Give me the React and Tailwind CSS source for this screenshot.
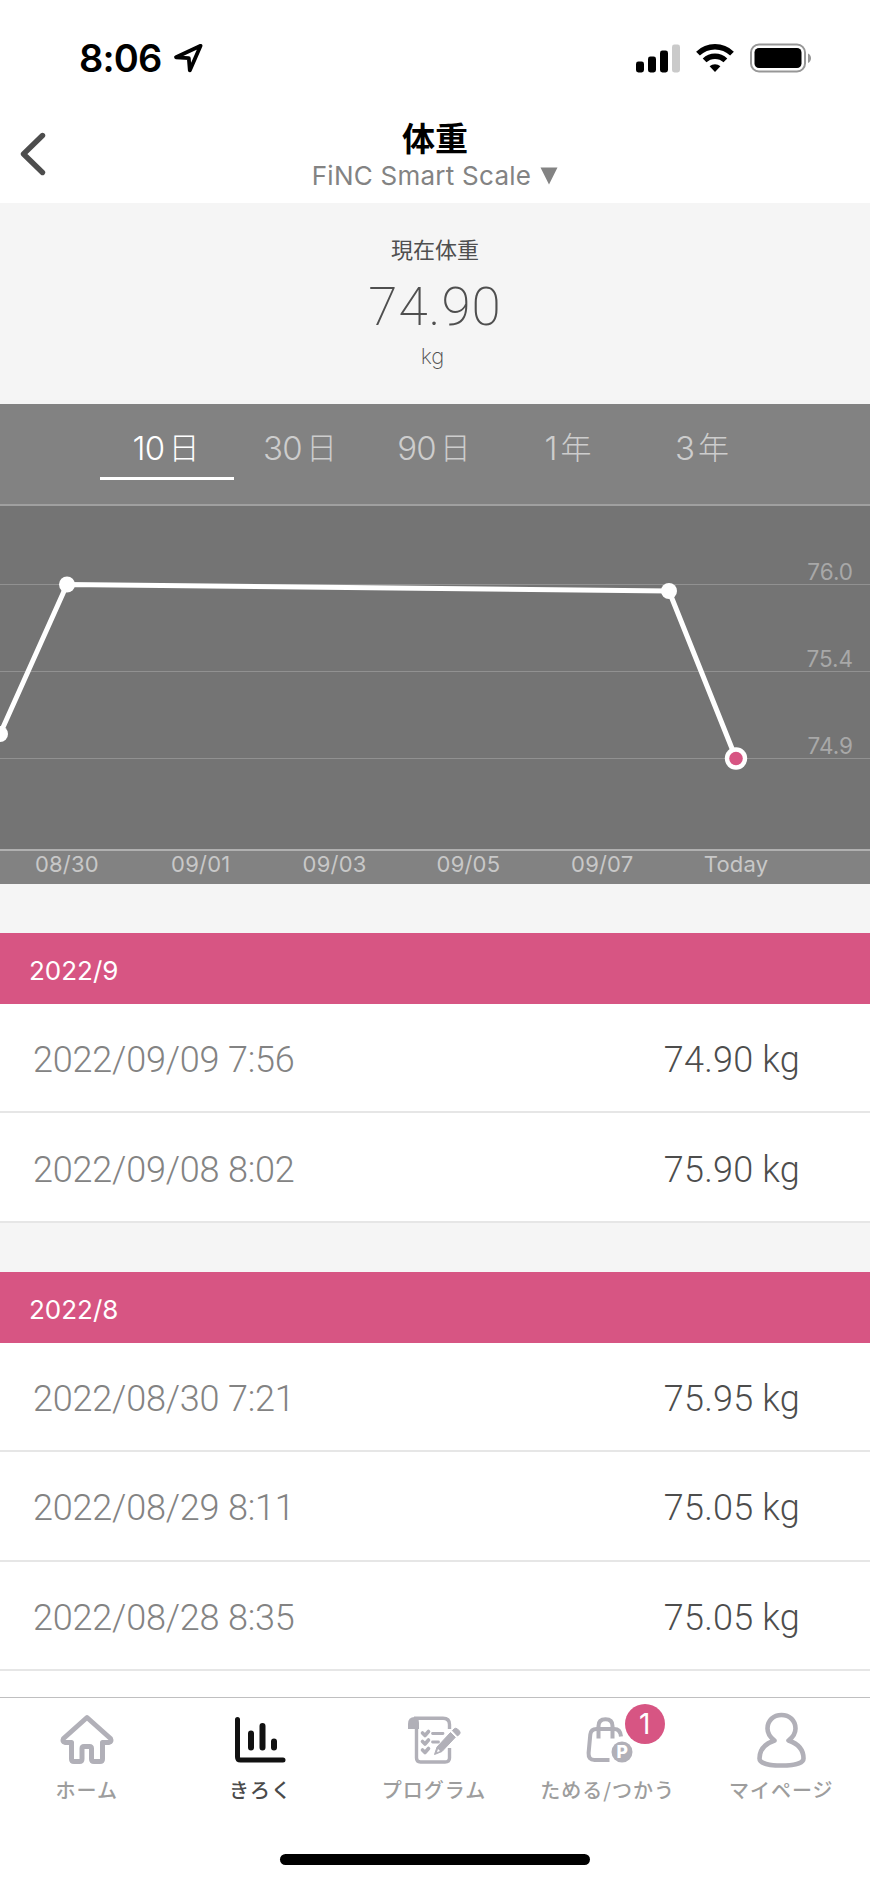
import React from 'react';

const ranges = [
  { count: '10', unit: '日' },
  { count: '30', unit: '日' },
  { count: '90', unit: '日' },
  { count: '1', unit: '年' },
  { count: '3', unit: '年' },
];

const dates = ['08/30', '09/01', '09/03', '09/05', '09/07', 'Today'];

const gridLines = [
  { y: 79.5, label: '76.0' },
  { y: 166.5, label: '75.4' },
  { y: 253.5, label: '74.9' },
];

const months = [
  {
    name: '2022/9',
    records: [
      { date: '2022/09/09 7:56', weight: '74.90 kg' },
      { date: '2022/09/08 8:02', weight: '75.90 kg' },
    ],
  },
  {
    name: '2022/8',
    records: [
      { date: '2022/08/30 7:21', weight: '75.95 kg' },
      { date: '2022/08/29 8:11', weight: '75.05 kg' },
      { date: '2022/08/28 8:35', weight: '75.05 kg' },
    ],
  },
];

const StatusBar = () => (
  <div className="h-[116px] pl-[79px] pr-[59px] flex items-center justify-between">
    <div className="flex items-center">
      <span className="text-[38px] leading-[38px] font-semibold tracking-[-0.8px] text-black">8:06</span>
      <svg className="ml-[11px]" width="32" height="32" viewBox="0 0 32 32" fill="none">
        <path d="M27.6 3.8 L3 15.3 L15.8 16.2 L16.8 28.4 Z" stroke="black" strokeWidth="3.8" strokeLinejoin="round" />
      </svg>
    </div>
    <svg width="176" height="30" viewBox="0 0 176 30">
      <rect x="1" y="18.5" width="8" height="11" rx="2.4" />
      <rect x="13" y="13.5" width="8" height="16" rx="2.4" />
      <rect x="25" y="7.5" width="8" height="22" rx="2.4" />
      <rect x="37" y="1.5" width="8" height="28" rx="2.4" fill="#cacaca" />
      <g fill="none" stroke="black" strokeWidth="5.4">
        <path d="M63 10.6 A24.5 24.5 0 0 1 97 10.6" />
        <path d="M69.6 17.4 A15 15 0 0 1 90.4 17.4" />
      </g>
      <path d="M80 29 L74.6 23.3 A8 8 0 0 1 85.4 23.3 Z" />
      <rect x="116" y="1.5" width="54" height="27" rx="8" fill="none" stroke="#979797" strokeWidth="2" />
      <rect x="119.5" y="5" width="47" height="20" rx="4.5" />
      <path d="M173 10.5 C177 12 177 18.5 173 20 Z" fill="#979797" />
    </svg>
  </div>
);

const Header = () => (
  <div className="h-[87px] grid grid-cols-[100px_1fr_100px]">
    <svg className="ml-[18px] mt-[14px]" width="32" height="48" viewBox="0 0 32 48" fill="none">
      <path d="M24.5 5.5 L5.5 24 L24.5 42.5" stroke="#4d4d4d" strokeWidth="5.4" strokeLinecap="round" strokeLinejoin="round" />
    </svg>
    <div className="flex flex-col items-center">
      <h1 className="mt-[5px] text-[33px] leading-[36px] font-bold text-black">体重</h1>
      <div className="mt-[3px] flex items-center text-[#838383]">
        <span className="text-[26px] leading-[32px] tracking-[0.25px]">FiNC Smart Scale</span>
        <svg className="ml-[9px]" width="18" height="18" viewBox="0 0 18 18">
          <path d="M0.5 0.5 H17.5 L9 17.5 Z" fill="#838383" />
        </svg>
      </div>
    </div>
  </div>
);

const CurrentWeight = () => (
  <div className="h-[201px] pt-[34px] flex flex-col items-center bg-[#f5f5f5] text-[#4f4f4f]">
    <p className="text-[22px] leading-[26px]">現在体重</p>
    <p className="mt-[18px] text-[53px] leading-[52px] font-extralight tracking-[1px] font-['Roboto',sans-serif]">74.90</p>
    <p className="mt-[10px] text-[22px] leading-[26px] font-extralight mr-[5px]">kg</p>
  </div>
);

const RangeTabs = () => (
  <div className="h-[100px] px-[100px] grid grid-cols-5 bg-[#828282]">
    {ranges.map(({ count, unit }, i) => (
      <button
        key={count}
        className={`h-[76px] pt-[24px] pr-[2px] text-[33px] leading-[40px] font-light border-b-[3px] flex justify-center gap-1 ${
          i === 0 ? 'text-white border-white' : 'text-[#cdcdcd] border-transparent'
        }`}
      >
        <span className="tracking-[-0.8px]">{count}</span>
        <span className="text-[31px]">{unit}</span>
      </button>
    ))}
  </div>
);

const Chart = () => (
  <div className="h-[380px] bg-[#828282]">
    <svg className="block" width="870" height="347" viewBox="0 0 870 347">
      <rect width="870" height="347" fill="#747474" />
      <rect width="870" height="2" fill="#a0a0a0" />
      {gridLines.map((line) => (
        <g key={line.label}>
          <rect y={line.y + 0.5} width="870" height="1" fill="#919191" />
          <text x="853" y={line.y - 4} textAnchor="end" fontSize="22.5" fill="#a8a8a8">{line.label}</text>
        </g>
      ))}
      <path d="M0 230 L67 80.5 L669 87 L736 254.5" fill="none" stroke="white" strokeWidth="5" strokeLinejoin="round" />
      <circle cx="0" cy="230" r="8" fill="white" />
      <circle cx="67" cy="80.5" r="8" fill="white" />
      <circle cx="669" cy="87" r="8" fill="white" />
      <circle cx="736" cy="254.5" r="11.2" fill="white" />
      <circle cx="736" cy="254.5" r="6.8" fill="#d75583" />
      <rect y="345" width="870" height="2" fill="#b0b0b0" />
    </svg>
    <div className="w-[803px] grid grid-cols-6 text-center text-[22px] leading-[26px] tracking-[0.2px] text-[#c8c8c8]">
      {dates.map((date) => (
        <span key={date}>{date}</span>
      ))}
    </div>
  </div>
);

const MonthSection = ({ name, records }) => (
  <section className="pt-[49px]">
    <h2 className="h-[71px] pl-[29px] pt-[4px] flex items-center bg-[#d75583] text-white text-[26px]">{name}</h2>
    {records.map((record) => (
      <div
        key={record.date}
        className="h-[109.4px] pt-[5px] pl-[33px] pr-[70px] flex items-center justify-between bg-white border-b-2 border-[#e6e6e6] text-[36px] font-light font-['Roboto',sans-serif]"
      >
        <span className="text-[#838383] tracking-[-0.2px]">{record.date}</span>
        <span className="text-[#4d4d4d] tracking-[0.2px]">{record.weight}</span>
      </div>
    ))}
  </section>
);

const HomeIcon = () => (
  <svg width="56" height="56" viewBox="0 0 56 56" fill="none" stroke="#b1b0b8" strokeWidth="5" strokeLinecap="round" strokeLinejoin="round">
    <path d="M28 5.5 L4.5 26.5 Q3 29.5 6 30.5 H12.5 V47 Q12.5 49.5 15 49.5 H20.5 Q23 49.5 23 47 V36.5 Q23 34.5 25 34.5 H30.5 Q32.5 34.5 32.5 36.5 V47 Q32.5 49.5 35 49.5 H41 Q43.5 49.5 43.5 47 V30.5 H50 Q53 29.5 51.5 26.5 Z" />
  </svg>
);

const ChartIcon = () => (
  <svg width="56" height="56" viewBox="0 0 56 56" fill="none" stroke="#111" strokeLinecap="round">
    <path d="M5.5 7.5 V45 Q5.5 48 8.5 48 H51" strokeWidth="5" strokeLinejoin="round" />
    <path d="M19 21.5 V35.5 M30.5 14 V35.5 M42 29.5 V35.5" strokeWidth="6" />
  </svg>
);

const ProgramIcon = () => (
  <svg width="56" height="56" viewBox="0 0 56 56" fill="none" stroke="#b1b0b8">
    <path d="M2 17 V12 Q2 5 8.5 5 Q13 5 13 11 V17 Z" fill="#b1b0b8" stroke="none" />
    <path d="M8 6.2 H37 Q43.5 6.2 43.5 12.5 V17" strokeWidth="3.4" />
    <path d="M10.5 15 V46 Q10.5 50 14.5 50 H39 Q43.5 50 43.5 46 V36" strokeWidth="3.4" />
    <path d="M16.5 21 L19 23.5 L22.5 19.5 M16.5 29.5 L19 32 L22.5 28 M16.5 38 L19 40.5 L22.5 36.5" strokeWidth="3.6" strokeLinecap="round" strokeLinejoin="round" />
    <path d="M26.5 21.5 H37 M26.5 30 H32.5" strokeWidth="2.8" strokeLinecap="round" />
    <path d="M44.5 20.5 L49.3 25.3 L36 39.5 L28.5 42.5 L31 35 Z" fill="#b1b0b8" stroke="#b1b0b8" strokeLinejoin="round" />
    <path d="M46.4 18.6 L48 17 Q49.5 15.5 51.5 17 L53.5 19 Q55 21 53.3 22.5 L51.4 23.9 Z" fill="#b1b0b8" stroke="#b1b0b8" strokeLinejoin="round" />
    <path d="M32 37 L34 39 L31 40.3 Z" fill="white" stroke="none" />
  </svg>
);

const BagIcon = () => (
  <svg width="56" height="56" viewBox="0 0 56 56" fill="none" stroke="#b1b0b8" strokeWidth="4">
    <path d="M18.5 26.5 V14 Q18.5 7.2 25.5 7.2 Q32.5 7.2 32.5 14 V26.5" />
    <path d="M41 24.5 Q40.5 17 34 17 H16.5 Q11 17 10.3 22.5 L8.6 41 Q8.2 48 14.5 48 H29.5" />
    <circle cx="42" cy="40" r="10.5" fill="#b1b0b8" stroke="none" />
    <text x="42.3" y="46.3" textAnchor="middle" fontSize="17.5" fontWeight="800" fill="white" stroke="none">P</text>
  </svg>
);

const PersonIcon = () => (
  <svg width="56" height="56" viewBox="0 0 56 56" fill="none" stroke="#b1b0b8" strokeWidth="4.6">
    <path d="M21.5 28.5 C16 24.5 14.5 20.5 14.5 16.5 C14.5 8.5 20.5 3 28.5 3 C36.5 3 42.5 8.5 42.5 16.5 C42.5 20.5 41 24.5 35.5 28.5 C44.5 31.5 50.5 37.5 50.5 46.5 C50.5 51.5 40 53.5 28.5 53.5 C17 53.5 6.5 51.5 6.5 46.5 C6.5 37.5 12.5 31.5 21.5 28.5 Z" strokeLinejoin="round" />
  </svg>
);

const navItems = [
  { label: 'ホーム', Icon: HomeIcon },
  { label: 'きろく', Icon: ChartIcon, active: true },
  { label: 'プログラム', Icon: ProgramIcon },
  { label: 'ためる/つかう', Icon: BagIcon, badge: 1 },
  { label: 'マイページ', Icon: PersonIcon },
];

const BottomNav = () => (
  <nav className="h-[186px] bg-white border-t border-[#bfbfc0] flex flex-col items-center">
    <div className="w-full h-[156px] pr-[2px] grid grid-cols-5">
      {navItems.map(({ label, Icon, active, badge }) => (
        <div key={label} className="relative pt-[14px] flex flex-col items-center">
          <Icon />
          {badge && (
            <span className="absolute left-[104px] top-[6px] w-10 h-10 rounded-full bg-[#d75583] text-white text-[28px] flex items-center justify-center">
              {badge}
            </span>
          )}
          <span className={`mt-[8px] text-[20px] leading-[28px] font-medium tracking-[1px] whitespace-nowrap font-['Noto_Sans_CJK_JP',sans-serif] ${active ? 'text-[#4a4a4a]' : 'text-[#9d9d9d]'}`}>
            {label}
          </span>
        </div>
      ))}
    </div>
    <div className="w-[310px] h-[11px] rounded-full bg-black" />
  </nav>
);

export default function App() {
  return (
    <div lang="ja" className="w-[870px] h-[1883px] overflow-hidden flex flex-col bg-white font-['Inter','Noto_Sans_CJK_JP',sans-serif]">
      <StatusBar />
      <Header />
      <div className="flex-1 min-h-0 overflow-hidden">
        <CurrentWeight />
        <RangeTabs />
        <Chart />
        <div className="bg-[#f5f5f5]">
          {months.map((month) => (
            <MonthSection key={month.name} name={month.name} records={month.records} />
          ))}
        </div>
      </div>
      <BottomNav />
    </div>
  );
}
